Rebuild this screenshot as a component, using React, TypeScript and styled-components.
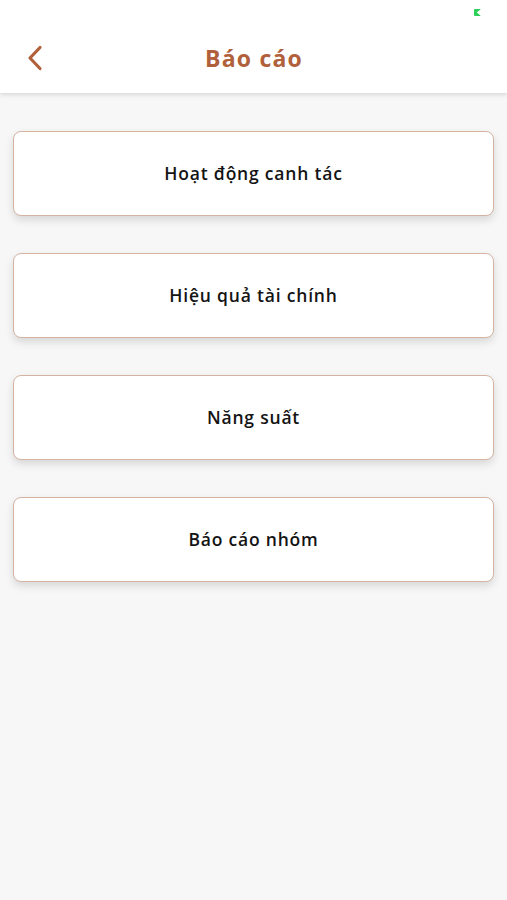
import styled, { createGlobalStyle } from 'styled-components';

const GlobalStyle = createGlobalStyle`
  html, body {
    margin: 0;
    padding: 0;
    background: #f7f7f7;
    font-family: 'Open Sans', 'Noto Sans', sans-serif;
  }
`;

const reports = [
  'Hoạt động canh tác',
  'Hiệu quả tài chính',
  'Năng suất',
  'Báo cáo nhóm',
];

const App = () => {
  return (
    <Page>
      <GlobalStyle />
      <Header>
        <StatusBar>
          <BatteryMark />
        </StatusBar>
        <NavBar>
          <BackButton aria-label="Quay lại">
            <svg width="16" height="26" viewBox="0 0 16 26" fill="none">
              <path
                d="M13 2.5L3 13l10 10.5"
                stroke="#b0603a"
                strokeWidth="3.2"
                strokeLinecap="round"
                strokeLinejoin="round"
              />
            </svg>
          </BackButton>
          <Title>Báo cáo</Title>
          <NavSpacer />
        </NavBar>
      </Header>
      <List>
        {reports.map((label) => (
          <ReportCard key={label}>{label}</ReportCard>
        ))}
      </List>
    </Page>
  );
};

const Page = styled.div`
  min-height: 900px;
  background: #f7f7f7;
`;

const Header = styled.header`
  background: #fff;
  height: 93px;
  box-shadow: 0 2px 4px rgba(0, 0, 0, 0.12);
  display: flex;
  flex-direction: column;
`;

const StatusBar = styled.div`
  height: 30px;
  display: flex;
  justify-content: flex-end;
  align-items: flex-start;
  padding: 9px 26px 0 0;
  box-sizing: border-box;
`;

const BatteryMark = styled.span`
  width: 7px;
  height: 7px;
  background: #2fd05a;
  border-radius: 1px;
  clip-path: polygon(0 0, 100% 0, 40% 50%, 100% 100%, 0 100%);
`;

const NavBar = styled.div`
  flex: 1;
  display: flex;
  align-items: center;
  padding: 0 20px 8px 27px;
`;

const BackButton = styled.button`
  background: none;
  border: none;
  padding: 0;
  width: 40px;
  display: flex;
  align-items: center;
  cursor: pointer;
`;

const NavSpacer = styled.div`
  width: 40px;
`;

const Title = styled.h1`
  flex: 1;
  margin: 0;
  text-align: center;
  font-size: 23px;
  font-weight: 700;
  color: #b0603a;
  letter-spacing: 1.2px;
  padding-right: 6px;
`;

const List = styled.div`
  display: flex;
  flex-direction: column;
  gap: 37px;
  padding: 38px 13px 0 13px;
`;

const ReportCard = styled.button`
  height: 85px;
  background: #fff;
  border: 1px solid #d4b4a1;
  border-radius: 8px;
  box-shadow: 0 4px 8px rgba(0, 0, 0, 0.13);
  font-family: 'Open Sans', 'Noto Sans', sans-serif;
  font-size: 17.5px;
  font-weight: 600;
  letter-spacing: 0.8px;
  color: #141414;
  padding-bottom: 2px;
  cursor: pointer;
`;

export default App;
